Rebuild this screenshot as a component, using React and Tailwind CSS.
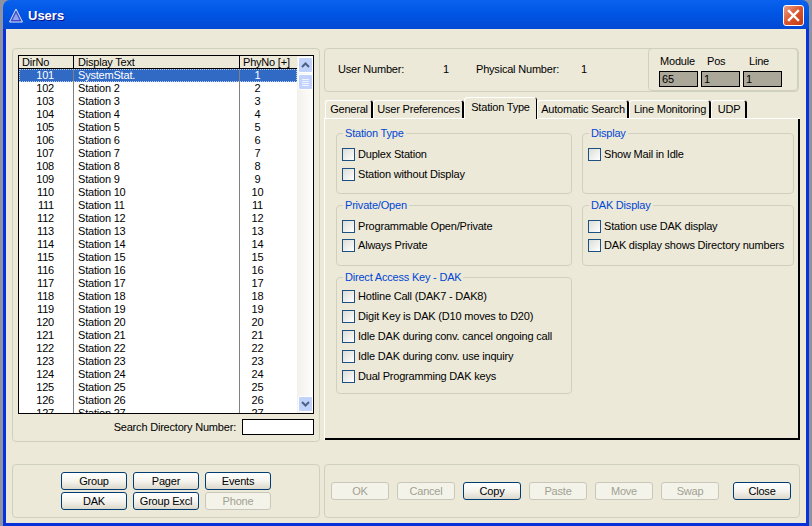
import React from 'react';

const rows = [
  { dir: 101, text: 'SystemStat.', phy: 1 },
  ...Array.from({ length: 26 }, (_, i) => ({ dir: 102 + i, text: `Station ${i + 2}`, phy: i + 2 })),
];

const tabs = [
  { label: 'General', w: 'w-[48px]' },
  { label: 'User Preferences', w: 'w-[91px]' },
  { label: 'Station Type', w: 'w-[73px]' },
  { label: 'Automatic Search', w: 'w-[92px]' },
  { label: 'Line Monitoring', w: 'w-[82px]' },
  { label: 'UDP', w: 'w-[36px]' },
];

function Btn({ label, disabled, className = 'w-[58px]' }) {
  return (
    <button
      className={`${className} h-[18px] rounded-[3px] border text-center leading-[15px] ${
        disabled
          ? 'border-[#c9c7ba] bg-[#f4f3ea] text-[#a1a192]'
          : 'border-[#003c74] bg-gradient-to-b from-white via-[#f5f4ee] to-[#dcd8cc] text-black'
      }`}
    >
      {label}
    </button>
  );
}

function Check({ label }) {
  return (
    <label className="flex h-[13px] items-center gap-[3px] whitespace-nowrap">
      <span className="h-[13px] w-[13px] shrink-0 border border-[#1c5180] bg-gradient-to-br from-[#dcdcd7] to-white" />
      <span>{label}</span>
    </label>
  );
}

function Group({ title, className = '', body = 'gap-[7px] pt-[8px]', children }) {
  return (
    <fieldset className={`rounded-[4px] border border-[#d0d0bf] ${className}`}>
      <legend className="ml-[6px] px-[2px] leading-[13px] text-[#0046d5]">{title}</legend>
      <div className={`flex flex-col pl-[5px] ${body}`}>{children}</div>
    </fieldset>
  );
}

function ScrollBtn({ up }) {
  return (
    <div className="flex h-[16px] w-[15px] items-center justify-center rounded-[2px] border border-white bg-[#c1d3fb]">
      <svg width="9" height="6" viewBox="0 0 9 6">
        <path d={up ? 'M1 5 L4.5 1.5 L8 5' : 'M1 1 L4.5 4.5 L8 1'} fill="none" stroke="#4d6185" strokeWidth="2" />
      </svg>
    </div>
  );
}

function Field({ value }) {
  return <div className="h-[16px] w-[39px] border border-black bg-[#aca899] pl-[2px] leading-[14px]">{value}</div>;
}

export default function App() {
  return (
    <div className="flex h-[526px] w-[812px] flex-col overflow-hidden bg-[#8d93a3] px-[3px] font-['Liberation_Sans',sans-serif] text-[11px] leading-[13px] tracking-[-0.2px] text-black">
      {/* title bar */}
      <div className="flex h-[29px] shrink-0 items-center rounded-t-[7px] bg-gradient-to-b from-[#0a62ee] via-[#0054e3] to-[#0348d4] pl-[6px] pr-[5px] pt-[1px]">
        <svg width="14" height="15" viewBox="0 0 14 15">
          <path d="M7 1 L13.5 14 L0.5 14 Z" fill="#3b49c4" stroke="#dfe4ff" strokeWidth="1" />
          <path d="M7 5 L10.5 12 L3.5 12 Z" fill="#8fa0ee" />
        </svg>
        <span className="ml-[5px] mt-[1px] text-[13px] font-bold tracking-normal text-white [text-shadow:1px_1px_0_#0f1089]">Users</span>
        <div className="ml-auto flex h-[21px] w-[21px] items-center justify-center rounded-[3px] border border-white bg-gradient-to-br from-[#e8a088] via-[#d9532c] to-[#c23a12]">
          <svg width="13" height="13" viewBox="0 0 13 13">
            <path d="M2 2 L11 11 M11 2 L2 11" stroke="white" strokeWidth="2.4" strokeLinecap="square" />
          </svg>
        </div>
      </div>

      {/* client area */}
      <div className="flex min-h-0 flex-1 flex-col border-x-[3px] border-b-[3px] border-[#0831d9] bg-[#ece9d8] pl-[6px] pr-[6px] pt-[19px]">
        <div className="flex gap-[4px]">
          {/* user list */}
          <div className="flex h-[394px] w-[308px] shrink-0 flex-col rounded-[4px] border border-[#d0d0bf] px-[5px] pt-[6px]">
            <div className="relative h-[359px] w-[296px] overflow-hidden border border-black bg-white pr-[16px]">
              <div className="flex h-[13px] border-b border-black bg-[#ece9d8]">
                <div className="w-[55px] border-r border-black pl-[3px]">DirNo</div>
                <div className="w-[166px] border-r border-black pl-[4px]">Display Text</div>
                <div className="flex-1 pl-[3px] whitespace-nowrap">PhyNo [+]</div>
              </div>
              {rows.map((r, i) => (
                <div
                  key={r.dir}
                  className={`flex h-[13px] ${i === 0 ? 'bg-[#316ac5] text-white outline-1 -outline-offset-1 outline-dotted outline-[#b9cdee]' : ''}`}
                >
                  <div className="w-[55px] border-r border-[#808080] pr-[19px] text-right">{r.dir}</div>
                  <div className="w-[166px] border-r border-[#808080] pl-[4px]">{r.text}</div>
                  <div className="flex-1 pl-[4px] pr-[26px] text-center">{r.phy}</div>
                </div>
              ))}
              <div className="absolute bottom-0 right-0 top-0 flex w-[16px] flex-col items-center justify-between bg-gradient-to-r from-[#f3f1ec] to-[#fdfdfa] py-[1px]">
                <div className="flex flex-col gap-[1px]">
                  <ScrollBtn up />
                  <div className="flex h-[16px] w-[15px] flex-col items-center justify-center gap-[1px] rounded-[2px] border border-white bg-[#c1d3fb]">
                    <div className="h-px w-[7px] bg-[#eef3ff]" />
                    <div className="h-px w-[7px] bg-[#eef3ff]" />
                    <div className="h-px w-[7px] bg-[#eef3ff]" />
                    <div className="h-px w-[7px] bg-[#eef3ff]" />
                  </div>
                </div>
                <ScrollBtn />
              </div>
            </div>
            <div className="mt-[5px] flex items-center justify-end gap-[6px]">
              <span>Search Directory Number:</span>
              <div className="h-[16px] w-[72px] border border-black bg-white" />
            </div>
          </div>

          {/* right side */}
          <div className="flex w-[476px] flex-col">
            <div className="relative flex h-[44px] w-[475px] items-center rounded-[4px] border border-[#d0d0bf] pb-[1px] pl-[13px]">
              <span className="w-[105px]">User Number:</span>
              <span className="w-[33px]">1</span>
              <span className="w-[105px]">Physical Number:</span>
              <span>1</span>
              <div className="absolute right-0 top-[-1px] flex h-[43px] w-[150px] flex-col rounded-[4px] border border-[#d0d0bf] pl-[10px] pt-[6px]">
                <div className="flex h-[13px]">
                  <span className="w-[48px] pl-[1px]">Module</span>
                  <span className="w-[42px]">Pos</span>
                  <span>Line</span>
                </div>
                <div className="mt-[3px] flex gap-[3px]">
                  <Field value="65" />
                  <Field value="1" />
                  <Field value="1" />
                </div>
              </div>
            </div>

            {/* tabs */}
            <div className="relative z-10 mt-[6px] flex h-[20px] items-end pl-[1px]">
              {tabs.map((t) => (
                <div
                  key={t.label}
                  className={
                    t.label === 'Station Type'
                      ? `-mb-px h-[22px] ${t.w} whitespace-nowrap rounded-t-[3px] bg-[#ece9d8] pt-[4px] text-center shadow-[inset_1px_1px_0_#ffffff,inset_-1px_0_0_#000000]`
                      : `h-[18px] ${t.w} whitespace-nowrap rounded-t-[3px] bg-[#ece9d8] pt-[3px] text-center shadow-[inset_1px_1px_0_#ffffff,inset_-2px_0_0_#000000]`
                  }
                >
                  {t.label}
                </div>
              ))}
            </div>
            <div className="flex h-[322px] gap-[10px] pl-[12px] pt-[9px] shadow-[inset_1px_1px_0_#ffffff,inset_-2px_-2px_0_#000000]">
              <div className="flex w-[236px] flex-col gap-[5px]">
                <Group title="Station Type" className="h-[67px]">
                  <Check label="Duplex Station" />
                  <Check label="Station without Display" />
                </Group>
                <Group title="Private/Open" className="h-[67px]" body="gap-[6px] pt-[8px]">
                  <Check label="Programmable Open/Private" />
                  <Check label="Always Private" />
                </Group>
                <Group title="Direct Access Key - DAK" className="h-[123px]" body="gap-[7px] pt-[6px]">
                  <Check label="Hotline Call (DAK7 - DAK8)" />
                  <Check label="Digit Key is DAK (D10 moves to D20)" />
                  <Check label="Idle DAK during conv. cancel ongoing call" />
                  <Check label="Idle DAK during conv. use inquiry" />
                  <Check label="Dual Programming DAK keys" />
                </Group>
              </div>
              <div className="flex w-[212px] flex-col gap-[5px]">
                <Group title="Display" className="h-[67px]">
                  <Check label="Show Mail in Idle" />
                </Group>
                <Group title="DAK Display" className="h-[67px]" body="gap-[6px] pt-[8px]">
                  <Check label="Station use DAK display" />
                  <Check label="DAK display shows Directory numbers" />
                </Group>
              </div>
            </div>
          </div>
        </div>

        {/* bottom bars */}
        <div className="mt-[22px] flex gap-[4px]">
          <div className="flex h-[54px] w-[308px] shrink-0 flex-col items-center gap-[2px] rounded-[4px] border border-[#d0d0bf] pt-[7px]">
            <div className="flex gap-[6px]">
              <Btn label="Group" className="w-[66px]" />
              <Btn label="Pager" className="w-[66px]" />
              <Btn label="Events" className="w-[66px]" />
            </div>
            <div className="flex gap-[6px]">
              <Btn label="DAK" className="w-[66px]" />
              <Btn label="Group Excl" className="w-[66px]" />
              <Btn label="Phone" disabled className="w-[66px]" />
            </div>
          </div>
          <div className="flex h-[54px] w-[476px] items-start gap-[8px] rounded-[4px] border border-[#d0d0bf] pl-[6px] pt-[17px]">
            <Btn label="OK" disabled />
            <Btn label="Cancel" disabled />
            <Btn label="Copy" />
            <Btn label="Paste" disabled />
            <Btn label="Move" disabled />
            <Btn label="Swap" disabled />
            <Btn label="Close" className="ml-[6px] w-[58px]" />
          </div>
        </div>
      </div>
    </div>
  );
}
